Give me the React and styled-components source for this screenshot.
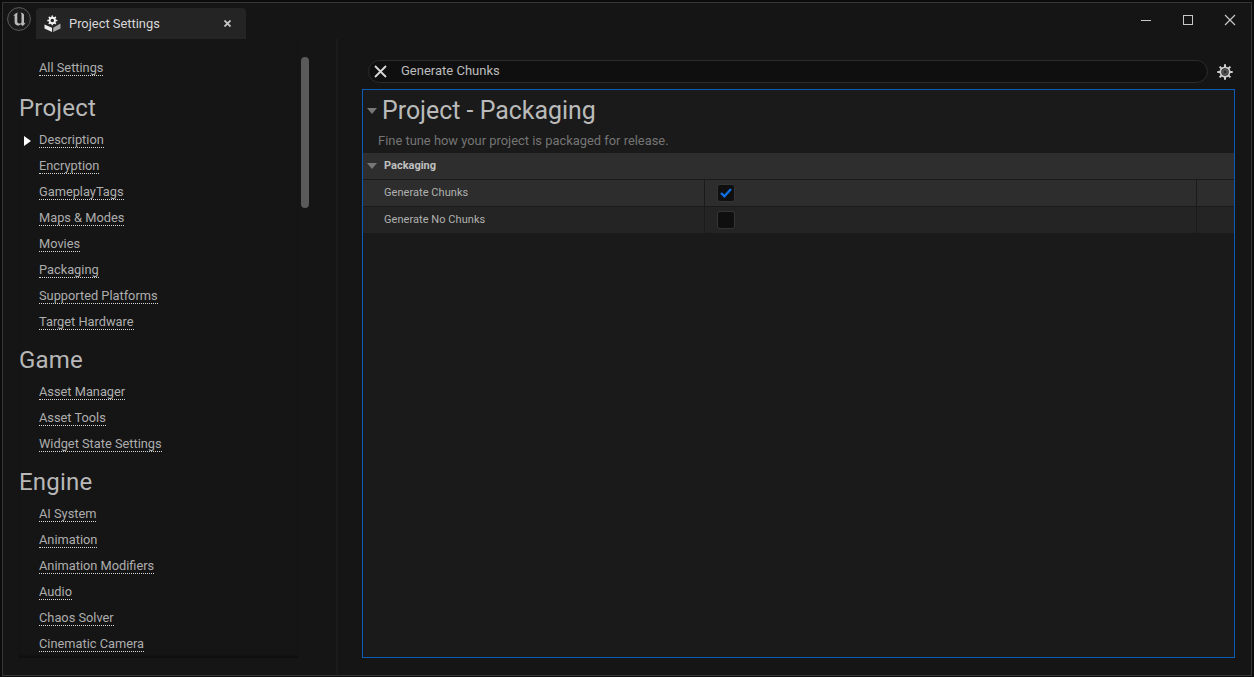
import React from "react";
import styled, { createGlobalStyle } from "styled-components";

const GlobalStyle = createGlobalStyle`
  html, body {
    margin: 0;
    padding: 0;
    height: 100%;
    background: #0c0c0c;
    overflow: hidden;
    font-family: Roboto, "Liberation Sans", sans-serif;
  }
  * { box-sizing: border-box; }
`;

const Window = styled.div`
  width: 1250px;
  height: 674px;
  margin: 2px 0 0 2px;
  background: #151515;
  border: 1px solid #353535;
  display: flex;
  flex-direction: column;
  overflow: hidden;
`;

const TitleBar = styled.div`
  height: 36px;
  flex: none;
  display: flex;
  align-items: flex-start;
  padding: 4px 0 0 4px;
`;

const Logo = styled.div`
  width: 24px;
  height: 24px;
  margin-right: 5px;
  display: flex;
`;

const Tab = styled.div`
  width: 210px;
  height: 31px;
  margin-top: 1px;
  background: #242424;
  border-radius: 4px 4px 0 0;
  display: flex;
  align-items: center;
  padding: 0 15px 1px 8px;
  color: #d8d8d8;
  font-size: 12.9px;
`;

const TabLabel = styled.span`
  margin-left: 8px;
  flex: 1;
`;

const WindowButtons = styled.div`
  margin-left: auto;
  display: flex;
  align-items: center;
  height: 26px;
`;

const WindowButton = styled.div`
  width: 42px;
  height: 26px;
  display: flex;
  align-items: center;
  justify-content: center;
`;

const Content = styled.div`
  flex: 1;
  min-height: 0;
  display: flex;
`;

const Sidebar = styled.div`
  position: relative;
  width: 335px;
  flex: none;
  border-right: 2px solid #1b1b1b;
  padding: 0 0 0 16px;
  overflow: hidden;
`;

const NavList = styled.div`
  height: 619px;
  width: 279px;
  overflow: hidden;
  padding-top: 16px;
  box-shadow: inset 0 -3px 2px -1px #0e0e0e;
`;

const SectionTitle = styled.div`
  height: 38px;
  margin-top: ${(p) => p.$top}px;
  display: flex;
  align-items: center;
  font-size: 24px;
  letter-spacing: 0.2px;
  color: #b8b8b8;
`;

const NavRow = styled.div`
  position: relative;
  height: 26px;
  display: flex;
  align-items: center;
  padding-left: 20px;
`;

const NavLink = styled.span`
  font-size: 12.8px;
  line-height: 15px;
  color: #adadad;
  border-bottom: 1px dotted #d8d8d8;
`;

const SelectedArrow = styled.span`
  position: absolute;
  left: 5px;
  top: 9px;
  width: 0;
  height: 0;
  border-left: 7px solid #ffffff;
  border-top: 5px solid transparent;
  border-bottom: 5px solid transparent;
`;

const ScrollThumb = styled.div`
  position: absolute;
  left: 298px;
  top: 18px;
  width: 8px;
  height: 151px;
  border-radius: 4px;
  background: #5a5a5a;
`;

const Main = styled.div`
  flex: 1;
  min-width: 0;
  display: flex;
  flex-direction: column;
  padding: 21px 16px 17px 24px;
`;

const SearchRow = styled.div`
  height: 23px;
  flex: none;
  display: flex;
  align-items: center;
  padding-left: 6px;
  margin-bottom: 6px;
`;

const SearchBox = styled.div`
  flex: 1;
  height: 23px;
  border: 1px solid #2c2c2c;
  border-radius: 12px;
  background: #0f0f0f;
  display: flex;
  align-items: center;
  padding-left: 5px;
  color: #bcbcbc;
  font-size: 13px;
`;

const SearchText = styled.span`
  margin-left: 14px;
  position: relative;
  top: -1px;
`;

const GearButton = styled.div`
  width: 26px;
  margin-left: 4px;
  margin-right: -3px;
  display: flex;
  justify-content: center;
`;

const Panel = styled.div`
  flex: 1;
  min-height: 0;
  border: 1px solid #0b5cb5;
  background: #1a1a1a;
  display: flex;
  flex-direction: column;
`;

const PanelHeader = styled.div`
  height: 40px;
  display: flex;
  align-items: center;
  padding: 1px 0 0 4px;
  font-size: 24.9px;
  color: #bababa;
`;

const Caret = styled.span`
  width: 0;
  height: 0;
  border-top: 6px solid #777777;
  border-left: 5px solid transparent;
  border-right: 5px solid transparent;
  margin-right: ${(p) => p.$gap}px;
`;

const Description = styled.div`
  height: 23px;
  padding: 0 0 3px 15px;
  display: flex;
  align-items: center;
  font-size: 12.9px;
  color: #757575;
`;

const CategoryRow = styled.div`
  height: 27px;
  display: flex;
  align-items: center;
  padding: 0 0 1px 4px;
  background: #2e2e2e;
  border-bottom: 1px solid #1a1a1a;
  font-size: 11px;
  font-weight: 700;
  color: #c0c0c0;
`;

const PropertyRow = styled.div`
  height: ${(p) => (p.$last ? 26 : 27)}px;
  display: grid;
  grid-template-columns: 341px 492px 1fr;
  background: ${(p) => (p.$last ? "#242424" : "#2d2d2d")};
  border-bottom: ${(p) => (p.$last ? "none" : "1px solid #1a1a1a")};
`;

const NameCell = styled.div`
  display: flex;
  align-items: center;
  padding: 0 0 1px 21px;
  font-size: 11px;
  letter-spacing: 0.05px;
  color: #b0b0b0;
`;

const ValueCell = styled.div`
  display: flex;
  align-items: center;
  padding-left: 12px;
  border-left: 1px solid #1a1a1a;
`;

const ExtraCell = styled.div`
  border-left: 1px solid #1a1a1a;
`;

const Checkbox = styled.div`
  width: 18px;
  height: 18px;
  border: 1px solid #353535;
  border-radius: 3px;
  background: #0f0f0f;
  display: flex;
  align-items: center;
  justify-content: center;
`;

const groups = [
  { title: "Project", top: 8, items: ["Description", "Encryption", "GameplayTags", "Maps & Modes", "Movies", "Packaging", "Supported Platforms", "Target Hardware"] },
  { title: "Game", top: 6, items: ["Asset Manager", "Asset Tools", "Widget State Settings"] },
  { title: "Engine", top: 6, items: ["AI System", "Animation", "Animation Modifiers", "Audio", "Chaos Solver", "Cinematic Camera"] },
];

const EngineLogo = () => (
  <svg width="24" height="24" viewBox="0 0 24 24">
    <circle cx="12" cy="12" r="11.4" fill="#1c1c1c" stroke="#5c5c5c" strokeWidth="1" />
    <path
      d="M11 5.5 C9 6 7.2 7.3 6.3 9 L7.6 8.4 V15 C7.6 17.2 9.2 18.6 11 18.6 C12.2 18.6 13.1 18 13.7 17.2 L15.6 19 C17 18.2 18 17 18.5 15.6 L17 16.2 V7.5 C16.2 6.4 15 5.7 13.5 5.6 C14.2 6.2 14.5 6.8 14.5 7.6 V15.4 C14 16.2 13.2 16.6 12.4 16.6 C11 16.6 10.3 15.8 10.3 14.6 V7.4 C10.3 6.6 10.5 6 11 5.5 Z"
      fill="#b8b8b8"
    />
  </svg>
);

const TabIcon = () => (
  <svg width="17" height="17" viewBox="0 0 17 17">
    <path d="M0.5 9.5 L8 12.8 V17 L0.5 13.5 Z" fill="#f0f0f0" />
    <path d="M16.5 8.5 L9.2 12.8 V17 L16.5 13.5 Z" fill="#a8a8a8" />
    <circle cx="8.3" cy="5.4" r="2.7" fill="none" stroke="#f0f0f0" strokeWidth="1.9" />
    <path d="M8.3 0.4 V2.4 M8.3 8.4 V10.2 M3.3 5.4 H5.3 M11.3 5.4 H13.3 M4.8 1.9 L6.2 3.3 M10.4 7.5 L11.8 8.9 M11.8 1.9 L10.4 3.3 M6.2 7.5 L4.8 8.9" stroke="#f0f0f0" strokeWidth="1.5" />
  </svg>
);

const CloseSmall = () => (
  <svg width="7" height="7" viewBox="0 0 7 7">
    <path d="M0.5 0.5 L6.5 6.5 M6.5 0.5 L0.5 6.5" stroke="#c8c8c8" strokeWidth="1.8" />
  </svg>
);

const GearIcon = () => (
  <svg width="16" height="16" viewBox="0 0 16 16">
    <circle cx="8" cy="8" r="4.6" fill="none" stroke="#d0d0d0" strokeWidth="1.8" />
    <circle cx="8" cy="8" r="3.2" fill="#555555" />
    <circle cx="8" cy="8" r="1.4" fill="#2c2c2c" />
    <path d="M8 0.3 V3 M8 13 V15.7 M0.3 8 H3 M13 8 H15.7 M2.6 2.6 L4.4 4.4 M11.6 11.6 L13.4 13.4 M13.4 2.6 L11.6 4.4 M4.4 11.6 L2.6 13.4" stroke="#d0d0d0" strokeWidth="2" />
  </svg>
);

export default function App() {
  return (
    <>
      <GlobalStyle />
      <Window>
        <TitleBar>
          <Logo>
            <EngineLogo />
          </Logo>
          <Tab>
            <TabIcon />
            <TabLabel>Project Settings</TabLabel>
            <CloseSmall />
          </Tab>
          <WindowButtons>
            <WindowButton>
              <svg width="12" height="12" viewBox="0 0 12 12">
                <path d="M1 6.5 H11" stroke="#c8c8c8" strokeWidth="1" />
              </svg>
            </WindowButton>
            <WindowButton>
              <svg width="12" height="12" viewBox="0 0 12 12">
                <rect x="1.5" y="1.5" width="9" height="9" fill="none" stroke="#c8c8c8" strokeWidth="1" />
              </svg>
            </WindowButton>
            <WindowButton>
              <svg width="12" height="12" viewBox="0 0 12 12">
                <path d="M1 1 L11 11 M11 1 L1 11" stroke="#c8c8c8" strokeWidth="1.2" />
              </svg>
            </WindowButton>
          </WindowButtons>
        </TitleBar>
        <Content>
          <Sidebar>
            <NavList>
              <NavRow>
                <NavLink>All Settings</NavLink>
              </NavRow>
              {groups.map((group) => (
                <React.Fragment key={group.title}>
                  <SectionTitle $top={group.top}>{group.title}</SectionTitle>
                  {group.items.map((item) => (
                    <NavRow key={item}>
                      {item === "Description" && <SelectedArrow />}
                      <NavLink>{item}</NavLink>
                    </NavRow>
                  ))}
                </React.Fragment>
              ))}
            </NavList>
            <ScrollThumb />
          </Sidebar>
          <Main>
            <SearchRow>
              <SearchBox>
                <svg width="13" height="13" viewBox="0 0 13 13">
                  <path d="M1 1 L12 12 M12 1 L1 12" stroke="#d8d8d8" strokeWidth="1.8" />
                </svg>
                <SearchText>Generate Chunks</SearchText>
              </SearchBox>
              <GearButton>
                <GearIcon />
              </GearButton>
            </SearchRow>
            <Panel>
              <PanelHeader>
                <Caret $gap={5} />
                Project - Packaging
              </PanelHeader>
              <Description>Fine tune how your project is packaged for release.</Description>
              <CategoryRow>
                <Caret $gap={7} />
                Packaging
              </CategoryRow>
              <PropertyRow>
                <NameCell>Generate Chunks</NameCell>
                <ValueCell>
                  <Checkbox>
                    <svg width="12" height="10" viewBox="0 0 12 10">
                      <path d="M1 5 L4.4 8.2 L11 1" fill="none" stroke="#0f6ee0" strokeWidth="2.4" />
                    </svg>
                  </Checkbox>
                </ValueCell>
                <ExtraCell />
              </PropertyRow>
              <PropertyRow $last>
                <NameCell>Generate No Chunks</NameCell>
                <ValueCell>
                  <Checkbox />
                </ValueCell>
                <ExtraCell />
              </PropertyRow>
            </Panel>
          </Main>
        </Content>
      </Window>
    </>
  );
}
